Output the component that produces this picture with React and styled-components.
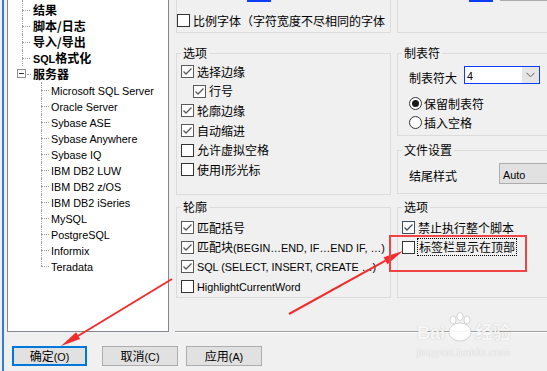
import React from "react";
import styled, { createGlobalStyle } from "styled-components";

const GlobalStyle = createGlobalStyle`
  html, body {
    margin: 0;
    padding: 0;
    background: #f0f0f0;
    overflow: hidden;
  }
  body {
    font-family: "Noto Sans CJK SC", "Noto Sans", sans-serif;
    font-size: 12px;
    color: #000;
  }
`;

// Latin runs are set narrower, like the UI font of the original dialog
const Latin = styled.span`
  font-family: "Liberation Sans", "Noto Sans", sans-serif;
  font-size: 10.8px;
`;

const Window = styled.div`
  position: relative;
  width: 547px;
  height: 371px;
  overflow: hidden;
  display: flex;
  background: #f0f0f0;
`;

const Edge = styled.div`
  flex: none;
  width: 2px;
  margin-left: 2px;
  background: #2f7fd8;
`;

const Main = styled.div`
  flex: 1;
  display: flex;
  flex-direction: column;
  min-width: 0;
`;

const Upper = styled.div`
  display: flex;
  height: 332px;
`;

/* ---------- tree ---------- */

const Tree = styled.div`
  flex: none;
  box-sizing: border-box;
  width: 162px;
  height: 332px;
  margin-left: 3px;
  background: #fff;
  border: 1px solid #828790;
  border-top: none;
  padding-top: 2px;
  overflow: hidden;
`;

const TreeRow = styled.div`
  position: relative;
  height: 16px;
  line-height: 16px;
  white-space: nowrap;
  padding-left: ${(p) => (p.$level === 0 ? 25 : 43)}px;
  font-weight: ${(p) => (p.$level === 0 ? 700 : 400)};

  &::before {
    content: "";
    position: absolute;
    left: ${(p) => (p.$level === 0 ? 14 : 33)}px;
    top: ${(p) => (p.$first ? -2 : 0)}px;
    height: ${(p) => (p.$last ? (p.$first ? 10 : 8) : p.$first ? 18 : 16)}px;
    border-left: 1px dotted #a0a0a0;
    display: ${(p) => (p.$toggle ? "none" : "block")};
  }

  &::after {
    content: "";
    position: absolute;
    left: ${(p) => (p.$level === 0 ? (p.$toggle ? 19 : 14) : 33)}px;
    top: 8px;
    width: ${(p) => (p.$toggle ? 4 : 8)}px;
    border-top: 1px dotted #a0a0a0;
  }
`;

const Toggle = styled.span`
  position: absolute;
  left: 9px;
  top: 3px;
  box-sizing: border-box;
  width: 9px;
  height: 9px;
  border: 1px solid #919191;
  background: #fff;
  display: flex;
  align-items: center;
  justify-content: center;

  &::after {
    content: "";
    width: 5px;
    height: 1px;
    background: #333;
  }
`;

/* ---------- content ---------- */

const Content = styled.div`
  flex: 1;
  box-sizing: border-box;
  height: 332px;
  margin-left: 6px;
  padding-left: 1px;
  border-bottom: 1px solid #a0a0a0;
  box-shadow: 0 1px 0 #fff;
  display: flex;
  gap: 6px;
  overflow: hidden;
`;

const Column = styled.div`
  flex: none;
  width: ${(p) => p.$width}px;
  display: flex;
  flex-direction: column;
`;

const TopPanel = styled.div`
  box-sizing: border-box;
  height: 33px;
  border: 1px solid #dcdcdc;
  border-top: none;
  overflow: hidden;
`;

const StubRow = styled.div`
  display: flex;
  height: 2px;
`;

const Stub = styled.div`
  flex: none;
  width: ${(p) => p.$width}px;
  margin-left: ${(p) => p.$offset}px;
  height: ${(p) => (p.$blue ? 2 : 1)}px;
  background: ${(p) => (p.$blue ? "#0a3cff" : "#adadad")};
`;

const Group = styled.fieldset`
  box-sizing: border-box;
  margin: ${(p) => p.$mt}px 0 0 0;
  padding: 0 0 0 4px;
  height: ${(p) => p.$height}px;
  border: 1px solid #dcdcdc;
  min-width: 0;
  overflow: hidden;
`;

const Legend = styled.legend`
  padding: 0 2px;
  margin-left: 0;
  height: 16px;
  line-height: 16px;
`;

const CheckRow = styled.div`
  display: flex;
  align-items: center;
  gap: 3px;
  height: ${(p) => p.$h || 19.6}px;
  margin-top: ${(p) => p.$mt || 0}px;
  margin-left: ${(p) => p.$indent || 0}px;
  white-space: nowrap;
`;

const Box = styled.span`
  flex: none;
  box-sizing: border-box;
  width: 13px;
  height: 13px;
  border: 1px solid ${(p) => (p.$checked ? p.$tone || "#5a5a5a" : "#333")};
  background: #fff;
  display: flex;
  align-items: center;
  justify-content: center;
`;

const Label = styled.span`
  line-height: 16px;
  ${(p) =>
    p.$focus &&
    `
    outline: 1px dotted #000;
    outline-offset: 0px;
    padding: 0 1px;
  `}
`;

const Check = ({ checked, tone, children, indent, mt, focus }) => (
  <CheckRow $indent={indent} $mt={mt}>
    <Box $checked={checked} $tone={tone}>
      {checked && (
        <svg width="11" height="11" viewBox="0 0 11 11">
          <polyline
            points="1.5,5.5 4,8 9.5,2.5"
            fill="none"
            stroke={tone || "#5a5a5a"}
            strokeWidth="1.3"
          />
        </svg>
      )}
    </Box>
    <Label $focus={focus}>{children}</Label>
  </CheckRow>
);

const FieldRow = styled.div`
  display: flex;
  align-items: center;
  height: ${(p) => p.$h}px;
  margin-top: ${(p) => p.$mt}px;
  margin-left: 7px;
  white-space: nowrap;
`;

const FieldLabel = styled.span`
  flex: none;
  width: ${(p) => p.$width}px;
  padding-top: ${(p) => p.$drop || 0}px;
`;

const Combo = styled.div`
  flex: none;
  box-sizing: border-box;
  width: 76px;
  height: 18px;
  border: 1px solid #0a3cff;
  background: #fff;
  display: flex;
  align-items: center;
`;

const ComboText = styled.span`
  flex: 1;
  padding-left: 2px;
  line-height: 16px;
`;

const ComboArrow = styled.span`
  flex: none;
  width: 17px;
  height: 16px;
  background: #e5e5e5;
  display: flex;
  align-items: center;
  justify-content: center;
`;

const Select = styled.div`
  flex: none;
  box-sizing: border-box;
  width: 60px;
  height: 21px;
  border: 1px solid #adadad;
  background: #e1e1e1;
  padding-left: 3px;
  line-height: 19px;
`;

const RadioRow = styled.div`
  display: flex;
  align-items: center;
  gap: 2px;
  height: 19px;
  margin-top: ${(p) => p.$mt || 0}px;
  margin-left: 7px;
  white-space: nowrap;
`;

const Radio = styled.span`
  flex: none;
  box-sizing: border-box;
  width: 13px;
  height: 13px;
  border-radius: 50%;
  border: 1px solid #333;
  background: #fff;
  display: flex;
  align-items: center;
  justify-content: center;

  &::after {
    content: "";
    display: ${(p) => (p.$on ? "block" : "none")};
    width: 7px;
    height: 7px;
    border-radius: 50%;
    background: #1a1a1a;
  }
`;

/* ---------- buttons ---------- */

const ButtonBar = styled.div`
  display: flex;
  padding: 14px 0 0 4px;
`;

const Button = styled.button`
  flex: none;
  box-sizing: border-box;
  width: ${(p) => p.$w}px;
  height: 20px;
  margin: 0 0 0 ${(p) => p.$ml}px;
  padding: 0;
  font: inherit;
  color: #000;
  background: #e1e1e1;
  border: ${(p) => (p.$default ? "2px solid #0078d7" : "1px solid #adadad")};
  line-height: 16px;
`;

/* ---------- overlays ---------- */

const Annotation = styled.svg`
  position: absolute;
  left: 0;
  top: 0;
  pointer-events: none;
`;

const Watermark = styled.div`
  position: absolute;
  left: 417px;
  top: 312px;
  color: rgba(255, 255, 255, 0.9);
  text-shadow: 0 0 1px rgba(110, 110, 110, 0.45);
  pointer-events: none;
  text-align: left;
`;

const MarkLogo = styled.div`
  display: flex;
  align-items: flex-end;
  gap: 2px;
  font-family: "Liberation Sans", "Noto Sans CJK SC", sans-serif;
  font-weight: 700;
  font-size: 18px;
  line-height: 18px;
  height: 30px;
`;

const MarkUrl = styled.div`
  font-family: "Liberation Sans", sans-serif;
  font-size: 11px;
  line-height: 12px;
  margin-top: 4px;
  letter-spacing: 0.3px;
`;

const servers = [
  "Microsoft SQL Server",
  "Oracle Server",
  "Sybase ASE",
  "Sybase Anywhere",
  "Sybase IQ",
  "IBM DB2 LUW",
  "IBM DB2 z/OS",
  "IBM DB2 iSeries",
  "MySQL",
  "PostgreSQL",
  "Informix",
  "Teradata",
];

const topItems = ["结果", "脚本/日志", "导入/导出"];

const App = () => {
  return (
    <>
      <GlobalStyle />
      <Window>
        <Edge />
        <Main>
          <Upper>
            <Tree>
              {topItems.map((t, i) => (
                <TreeRow key={t} $level={0} $first={i === 0}>
                  {t}
                </TreeRow>
              ))}
              <TreeRow $level={0}>
                <Latin>SQL</Latin>格式化
              </TreeRow>
              <TreeRow $level={0} $toggle>
                <Toggle />
                服务器
              </TreeRow>
              {servers.map((s, i) => (
                <TreeRow key={s} $level={1} $last={i === servers.length - 1}>
                  <Latin>{s}</Latin>
                </TreeRow>
              ))}
            </Tree>

            <Content>
              <Column $width={215}>
                <TopPanel>
                  <StubRow>
                    <Stub $blue $offset={70} $width={24} />
                  </StubRow>
                  <Check mt={9}>比例字体（字符宽度不尽相同的字体</Check>
                </TopPanel>

                <Group $mt={12} $height={150}>
                  <Legend>选项</Legend>
                  <Check checked mt={1}>选择边缘</Check>
                  <Check checked indent={12}>行号</Check>
                  <Check checked>轮廓边缘</Check>
                  <Check checked>自动缩进</Check>
                  <Check>允许虚拟空格</Check>
                  <Check>使用I形光标</Check>
                </Group>

                <Group $mt={4} $height={99}>
                  <Legend>轮廓</Legend>
                  <Check checked mt={3}>匹配括号</Check>
                  <Check checked>
                    匹配块<Latin>(BEGIN…END, IF…END IF, …)</Latin>
                  </Check>
                  <Check checked>
                    <Latin>SQL (SELECT, INSERT, CREATE …)</Latin>
                  </Check>
                  <Check>
                    <Latin>HighlightCurrentWord</Latin>
                  </Check>
                </Group>
              </Column>

              <Column $width={170}>
                <TopPanel>
                  <StubRow>
                    <Stub $blue $offset={71} $width={24} />
                    <Stub $offset={7} $width={70} />
                  </StubRow>
                </TopPanel>

                <Group $mt={12} $height={91}>
                  <Legend>制表符</Legend>
                  <FieldRow $h={18} $mt={5}>
                    <FieldLabel $width={55} $drop={5}>
                      制表符大
                    </FieldLabel>
                    <Combo>
                      <ComboText>
                        <Latin>4</Latin>
                      </ComboText>
                      <ComboArrow>
                        <svg width="9" height="6" viewBox="0 0 9 6">
                          <polyline
                            points="0.5,0.8 4.5,4.8 8.5,0.8"
                            fill="none"
                            stroke="#606060"
                            strokeWidth="1"
                          />
                        </svg>
                      </ComboArrow>
                    </Combo>
                  </FieldRow>
                  <RadioRow $mt={10}>
                    <Radio $on />
                    保留制表符
                  </RadioRow>
                  <RadioRow>
                    <Radio />
                    插入空格
                  </RadioRow>
                </Group>

                <Group $mt={6} $height={52}>
                  <Legend>文件设置</Legend>
                  <FieldRow $h={21} $mt={5}>
                    <FieldLabel $width={90} $drop={3}>
                      结尾样式
                    </FieldLabel>
                    <Select>
                      <Latin>Auto</Latin>
                    </Select>
                  </FieldRow>
                </Group>

                <Group $mt={5} $height={99}>
                  <Legend>选项</Legend>
                  <Check checked tone="#3d4f66" mt={3}>
                    禁止执行整个脚本
                  </Check>
                  <Check focus>标签栏显示在顶部</Check>
                </Group>
              </Column>
            </Content>
          </Upper>

          <ButtonBar>
            <Button $default $w={75} $ml={4}>
              确定<Latin>(O)</Latin>
            </Button>
            <Button $w={76} $ml={15}>
              取消<Latin>(C)</Latin>
            </Button>
            <Button $w={76} $ml={8}>
              应用<Latin>(A)</Latin>
            </Button>
          </ButtonBar>
        </Main>

        <Watermark>
          <MarkLogo>
            <span>Bai</span>
            <svg width="26" height="30" viewBox="0 0 26 30">
              <g fill="rgba(255,255,255,0.9)" stroke="rgba(120,120,120,0.45)" strokeWidth="0.6">
                <ellipse cx="6" cy="8" rx="3" ry="4" />
                <ellipse cx="13" cy="4.5" rx="3" ry="4" />
                <ellipse cx="20" cy="8" rx="3" ry="4" />
                <ellipse cx="13" cy="20" rx="11" ry="9" />
              </g>
            </svg>
            <span>经验</span>
          </MarkLogo>
          <MarkUrl>jingyan.baidu.com</MarkUrl>
        </Watermark>

        <Annotation width="547" height="371" viewBox="0 0 547 371">
          <line x1="172" y1="279" x2="78" y2="336" stroke="#ee2e2e" strokeWidth="2" />
          <polygon points="61,346 80.2,339.1 76,332.3" fill="#ee2e2e" />
          <line x1="289" y1="314" x2="385.5" y2="260.7" stroke="#ee2e2e" strokeWidth="2" />
          <polygon points="403,251 387.4,264.2 383.6,257.2" fill="#ee2e2e" />
          <rect x="390" y="236" width="136" height="35" fill="none" stroke="#f04444" strokeWidth="2" />
        </Annotation>
      </Window>
    </>
  );
};

export default App;
